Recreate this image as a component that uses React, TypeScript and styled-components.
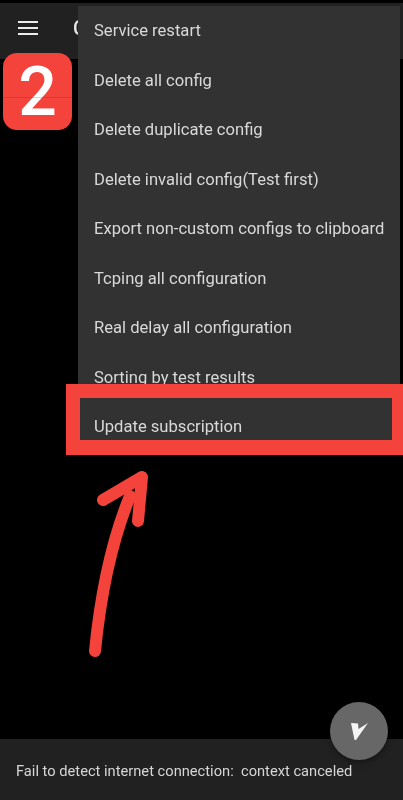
import React from "react";
import styled, { createGlobalStyle } from "styled-components";

const Global = createGlobalStyle`
  html, body { margin: 0; padding: 0; background: #000; }
  * { box-sizing: border-box; }
`;

const Page = styled.div`
  position: relative;
  width: 403px;
  height: 800px;
  overflow: hidden;
  background: #000;
  display: flex;
  flex-direction: column;
  font-family: Roboto, "Liberation Sans", sans-serif;
`;

const Toolbar = styled.header`
  margin-top: 3px;
  height: 56px;
  flex: none;
  background: #212121;
  display: flex;
  align-items: center;
  padding: 0 0 6px 18px;
  gap: 35px;
`;

const MenuButton = styled.svg`
  width: 20px;
  height: 14px;
  flex: none;
  filter: blur(0.4px);
`;

const Title = styled.h1`
  margin: 0;
  font-size: 20px;
  font-weight: 500;
  color: #e4e4e4;
  filter: blur(0.4px);
`;

const Content = styled.main`
  flex: 1;
  background: #000;
`;

const Snackbar = styled.footer`
  height: 61px;
  flex: none;
  background: #212121;
  display: flex;
  align-items: center;
  padding: 2px 0 0 16px;
  font-size: 14.68px;
  color: #d6d6d6;
  white-space: pre;
  filter: blur(0.4px);
`;

const Dropdown = styled.ul`
  position: absolute;
  top: 6px;
  left: 78px;
  width: 322px;
  margin: 0;
  padding: 0;
  list-style: none;
  background: #323232;
`;

const DropdownItem = styled.li`
  height: 49.5px;
  display: flex;
  align-items: center;
  padding-left: 16px;
  font-size: 16.6px;
  color: #d9d9d9;
  white-space: nowrap;
  filter: blur(0.4px);
`;

const StepBadge = styled.div`
  position: absolute;
  top: 53px;
  left: 3px;
  width: 69px;
  height: 77px;
  border-radius: 14px;
  background: #f4433a;
  display: flex;
  align-items: center;
  justify-content: center;
  color: #fff;
  font-family: Roboto, "Liberation Sans", sans-serif;
  font-weight: 500;
  font-size: 68px;
  line-height: 1;
  filter: blur(0.4px);

  &::after {
    content: "";
    position: absolute;
    left: 0;
    right: 0;
    top: 44px;
    height: 1px;
    background: rgba(120, 20, 20, 0.2);
  }
`;

const HighlightFrame = styled.div`
  position: absolute;
  top: 384px;
  left: 66px;
  width: 337px;
  height: 71px;
  border-style: solid;
  border-color: #f4433a;
  border-width: 14px 11px 15px 14px;
`;

const Arrow = styled.svg`
  position: absolute;
  top: 460px;
  left: 80px;
  width: 80px;
  height: 200px;
  filter: blur(0.4px);
`;

const Fab = styled.button`
  position: absolute;
  top: 702px;
  left: 330px;
  width: 58px;
  height: 58px;
  padding: 0;
  border: none;
  border-radius: 50%;
  background: #676767;
  box-shadow: 0 2px 6px rgba(0, 0, 0, 0.4);
  display: flex;
  align-items: center;
  justify-content: center;
`;

const FabLogo = styled.svg`
  width: 17px;
  height: 17px;
  filter: blur(0.3px);
`;

const items = [
  "Service restart",
  "Delete all config",
  "Delete duplicate config",
  "Delete invalid config(Test first)",
  "Export non-custom configs to clipboard",
  "Tcping all configuration",
  "Real delay all configuration",
  "Sorting by test results",
  "Update subscription",
];

export default function App() {
  return (
    <Page>
      <Global />
      <Toolbar>
        <MenuButton viewBox="0 0 20 14" aria-hidden="true">
          <path d="M0 1h20M0 7h20M0 13h20" stroke="#ececec" strokeWidth="2" />
        </MenuButton>
        <Title>C</Title>
      </Toolbar>
      <Content />
      <Snackbar>Fail to detect internet connection:  context canceled</Snackbar>
      <Dropdown>
        {items.map((item) => (
          <DropdownItem key={item}>{item}</DropdownItem>
        ))}
      </Dropdown>
      <StepBadge>2</StepBadge>
      <HighlightFrame />
      <Arrow viewBox="0 0 80 200" aria-hidden="true">
        <path d="M15 191C20 140 30 85 50 36" fill="none" stroke="#f4433a" strokeWidth="12" strokeLinecap="round" />
        <path d="M23 40L62 17L58 61" fill="none" stroke="#f4433a" strokeWidth="12" strokeLinecap="round" strokeLinejoin="round" />
      </Arrow>
      <Fab aria-label="Connect">
        <FabLogo viewBox="0 0 17 17" aria-hidden="true">
          <path d="M0 0L7 .5L7.5 6L17 0L5 17H3.5Z" fill="#f4f4f4" />
        </FabLogo>
      </Fab>
    </Page>
  );
}
